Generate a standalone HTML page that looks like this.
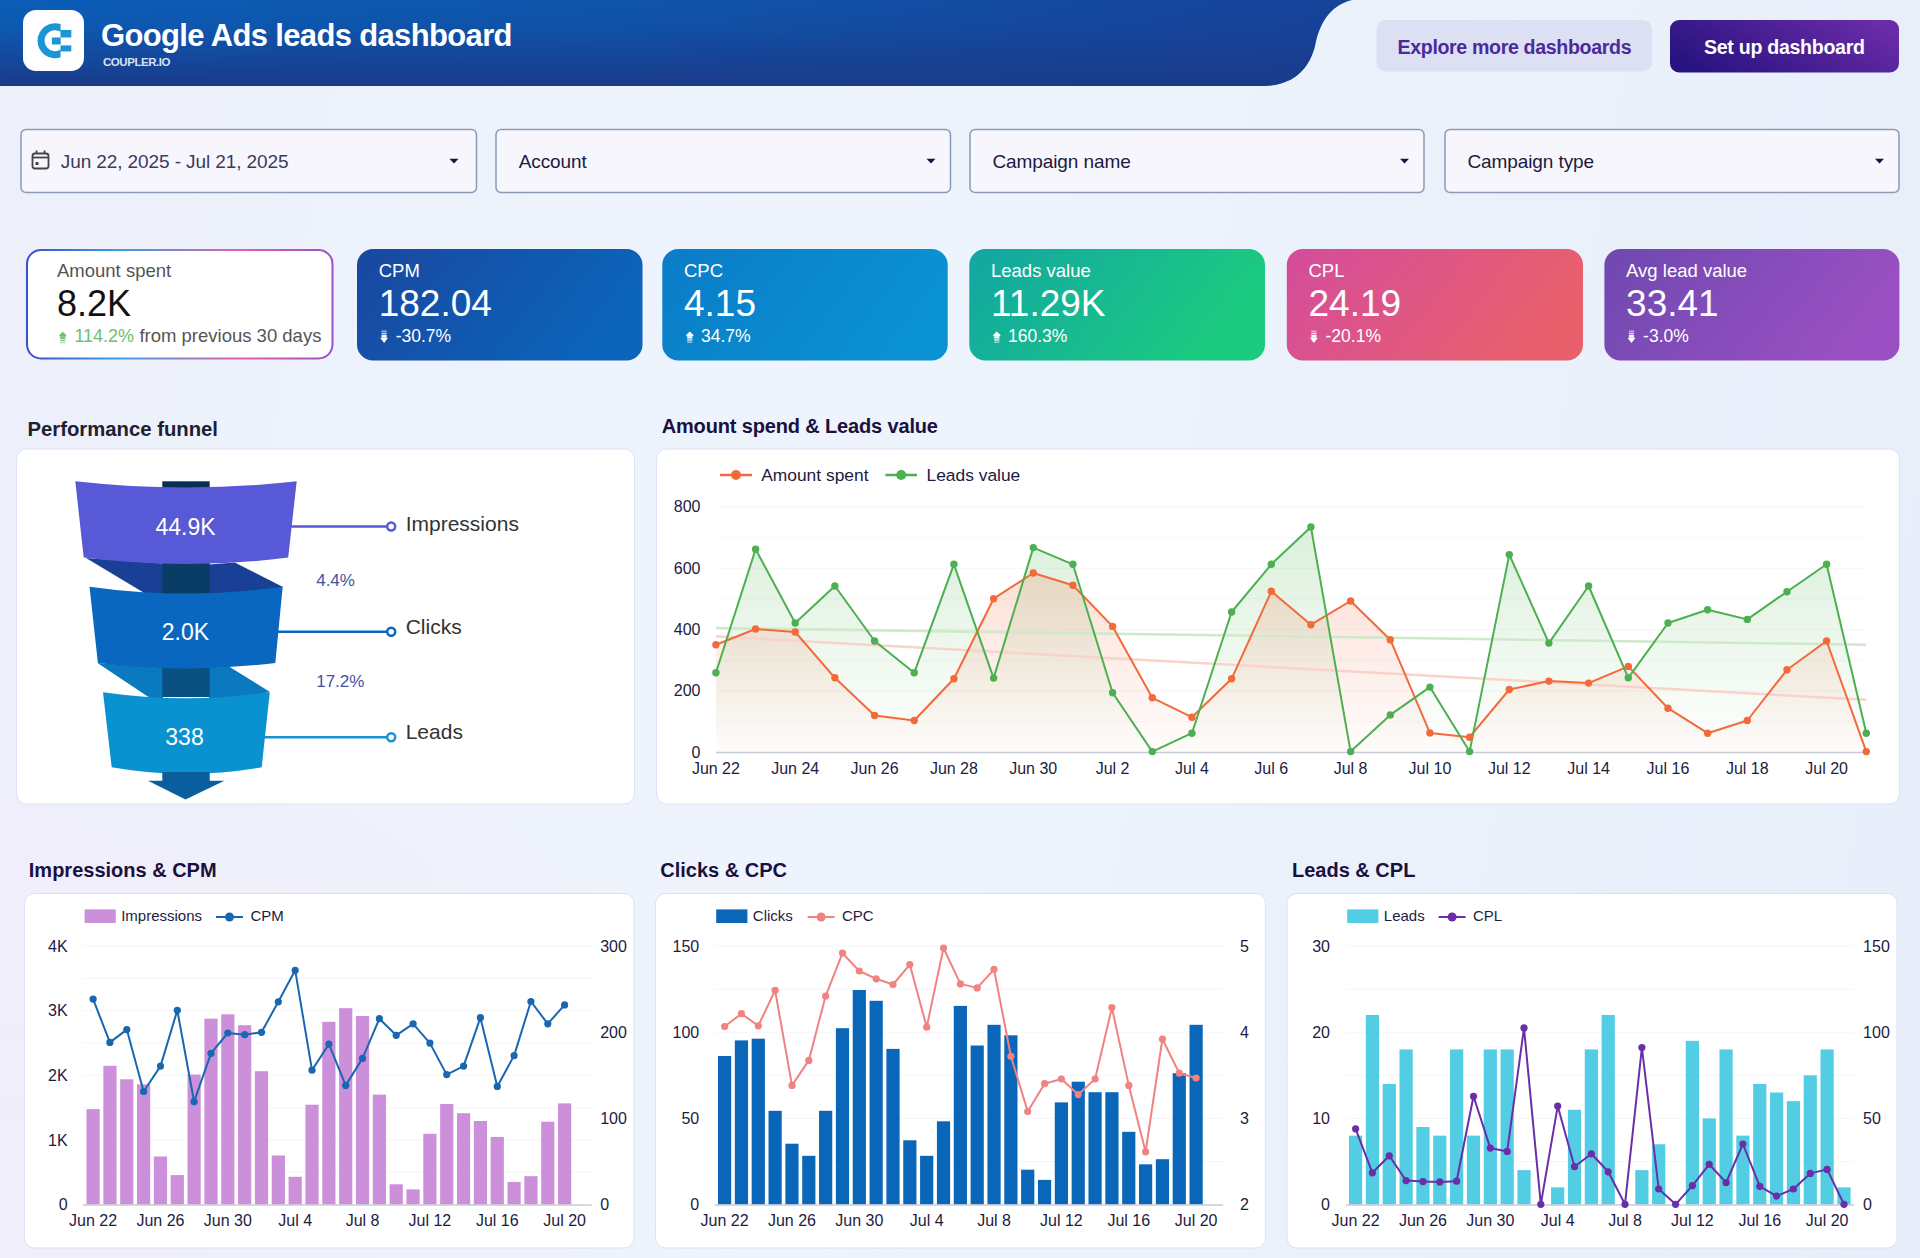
<!DOCTYPE html>
<html><head><meta charset="utf-8"><style>
html,body{margin:0;padding:0;width:1920px;height:1258px;overflow:hidden;}
body{background:radial-gradient(ellipse 800px 500px at 0% 85%,rgba(241,237,250,0.95),rgba(241,237,250,0)),linear-gradient(100deg,#edf0fa 0%,#eef4fd 45%,#e7eef9 100%);font-family:"Liberation Sans",sans-serif;}
svg{position:absolute;left:0;top:0;font-family:"Liberation Sans",sans-serif;}
</style></head><body>
<svg width="1920" height="1258" viewBox="0 0 1920 1258">
<defs>
<linearGradient id="hdr" gradientUnits="userSpaceOnUse" x1="0" y1="0" x2="1350" y2="0">
<stop offset="0" stop-color="#0a5eb8"/><stop offset="0.5" stop-color="#0f54aa"/><stop offset="1" stop-color="#17429a"/></linearGradient>
<linearGradient id="hdrv" gradientUnits="userSpaceOnUse" x1="0" y1="0" x2="0" y2="86">
<stop offset="0" stop-color="#1a3b8a" stop-opacity="0"/><stop offset="0.3" stop-color="#1a3b8a" stop-opacity="0.15"/><stop offset="1" stop-color="#1a3b8a" stop-opacity="1"/></linearGradient>
<linearGradient id="btn" x1="0" y1="0.7" x2="1" y2="0.3">
<stop offset="0" stop-color="#27137f"/><stop offset="1" stop-color="#6a2ba8"/></linearGradient>
<linearGradient id="kb0" x1="0" y1="0" x2="1" y2="0">
<stop offset="0" stop-color="#3b4fc8"/><stop offset="0.3" stop-color="#3aa0e0"/><stop offset="0.7" stop-color="#e060b0"/><stop offset="1" stop-color="#9a50c8"/></linearGradient>
<linearGradient id="kc0" x1="0" y1="0" x2="1" y2="0.3">
<stop offset="0" stop-color="#1a47a0"/><stop offset="1" stop-color="#0b64ba"/></linearGradient>
<linearGradient id="kc1" x1="0" y1="0" x2="1" y2="0.3">
<stop offset="0" stop-color="#0a7cc8"/><stop offset="1" stop-color="#0a92d2"/></linearGradient>
<linearGradient id="kc2" x1="0" y1="0" x2="1" y2="0.3">
<stop offset="0" stop-color="#12a6a2"/><stop offset="1" stop-color="#1ccb80"/></linearGradient>
<linearGradient id="kc3" x1="0" y1="0" x2="1" y2="0.3">
<stop offset="0" stop-color="#d44c9c"/><stop offset="1" stop-color="#e8606c"/></linearGradient>
<linearGradient id="kc4" x1="0" y1="0" x2="1" y2="0.3">
<stop offset="0" stop-color="#6e48b0"/><stop offset="1" stop-color="#9a50c2"/></linearGradient>
<linearGradient id="gA" x1="0" y1="0" x2="0" y2="1" gradientUnits="userSpaceOnUse" x2u="0">
</linearGradient>
<linearGradient id="fillO" gradientUnits="userSpaceOnUse" x1="0" y1="560" x2="0" y2="752">
<stop offset="0" stop-color="#f4805a" stop-opacity="0.26"/><stop offset="1" stop-color="#f4805a" stop-opacity="0.02"/></linearGradient>
<linearGradient id="fillG" gradientUnits="userSpaceOnUse" x1="0" y1="530" x2="0" y2="752">
<stop offset="0" stop-color="#5cb85c" stop-opacity="0.22"/><stop offset="1" stop-color="#5cb85c" stop-opacity="0.0"/></linearGradient>
</defs>
<path d="M0 0 H1352 C1328 6 1319 26 1315 46 C1309 70 1292 86 1262 86 H0 Z" fill="url(#hdr)"/>
<path d="M0 0 H1352 C1328 6 1319 26 1315 46 C1309 70 1292 86 1262 86 H0 Z" fill="url(#hdrv)"/>
<rect x="23" y="10" width="61" height="61" rx="13" fill="#ffffff"/>
<path d="M60.6 24.1 A17.5 17.5 0 1 0 60.6 57.3 L60.6 49.6 A10.5 10.5 0 1 1 60.6 31.8 Z" fill="#1a96d4"/>
<rect x="60.5" y="30" width="10.8" height="7.5" fill="#1a96d4"/>
<rect x="51.9" y="37.5" width="8.8" height="7" fill="#1a96d4"/>
<rect x="60.5" y="45.4" width="10.8" height="6" fill="#1a96d4"/>
<text x="101.00" y="46.00" font-size="31" fill="#ffffff" font-weight="bold" text-anchor="start" letter-spacing="-0.65" >Google Ads leads dashboard</text>
<text x="103.00" y="66.00" font-size="11.5" fill="#d8e2f4" font-weight="bold" text-anchor="start" letter-spacing="-0.45" >COUPLER.IO</text>
<rect x="1376.5" y="20" width="275.5" height="51.5" rx="9" fill="#dce0f2"/>
<text x="1397.50" y="53.80" font-size="19.6" fill="#4b2a9c" font-weight="bold" text-anchor="start" letter-spacing="-0.35" >Explore more dashboards</text>
<rect x="1670" y="20" width="229" height="52.5" rx="9" fill="url(#btn)"/>
<text x="1704.00" y="53.80" font-size="19.6" fill="#ffffff" font-weight="bold" text-anchor="start" letter-spacing="-0.3" >Set up dashboard</text>
<rect x="21" y="129.5" width="455.5" height="63" rx="5" fill="#f7f6fd" stroke="#8b9bb4" stroke-width="1.5"/>
<text x="60.80" y="168.00" font-size="19" fill="#3d3a5e" text-anchor="start" letter-spacing="-0.1" >Jun 22, 2025 - Jul 21, 2025</text>
<path d="M449.5 158.8 H458.5 L454 163.6 Z" fill="#17143f"/>
<rect x="496" y="129.5" width="454.5" height="63" rx="5" fill="#f7f6fd" stroke="#8b9bb4" stroke-width="1.5"/>
<text x="518.70" y="168.00" font-size="19" fill="#1d1a3e" text-anchor="start" letter-spacing="-0.1" >Account</text>
<path d="M926.5 158.8 H935.5 L931 163.6 Z" fill="#17143f"/>
<rect x="970" y="129.5" width="454" height="63" rx="5" fill="#f7f6fd" stroke="#8b9bb4" stroke-width="1.5"/>
<text x="992.50" y="168.00" font-size="19" fill="#1d1a3e" text-anchor="start" letter-spacing="-0.1" >Campaign name</text>
<path d="M1400.0 158.8 H1409.0 L1404.5 163.6 Z" fill="#17143f"/>
<rect x="1445" y="129.5" width="454" height="63" rx="5" fill="#f7f6fd" stroke="#8b9bb4" stroke-width="1.5"/>
<text x="1467.50" y="168.00" font-size="19" fill="#1d1a3e" text-anchor="start" letter-spacing="-0.1" >Campaign type</text>
<path d="M1875.0 158.8 H1884.0 L1879.5 163.6 Z" fill="#17143f"/>
<g fill="none" stroke="#444" stroke-width="1.8"><rect x="32.5" y="153.5" width="16" height="15" rx="2.5"/><line x1="32.5" y1="157.5" x2="48.5" y2="157.5"/><line x1="36.5" y1="150.5" x2="36.5" y2="154"/><line x1="44.5" y1="150.5" x2="44.5" y2="154"/></g><rect x="35.5" y="162" width="3" height="3" fill="#444"/>
<rect x="27" y="250" width="305.5" height="108.5" rx="14" fill="#ffffff" stroke="url(#kb0)" stroke-width="2"/>
<text x="57.00" y="276.60" font-size="18.5" fill="#555555" text-anchor="start" >Amount spent</text>
<text x="57.00" y="315.60" font-size="36" fill="#111111" text-anchor="start" >8.2K</text>
<text x="74.40" y="341.70" font-size="18" fill="#6cc070" text-anchor="start" >114.2%</text>
<text x="139.40" y="341.70" font-size="18.5" fill="#555555" text-anchor="start" >from previous 30 days</text>
<path d="M62.800000000000004 331.7 L66.4 335.3 V336.5 H59.2 V335.3 Z" fill="#6cc070"/><rect x="60.2" y="336.5" width="5.2" height="2.4" fill="#6cc070" opacity="0.95"/><rect x="60.2" y="339.5" width="5.2" height="1.6" fill="#6cc070" opacity="0.75"/><rect x="60.2" y="341.7" width="5.2" height="1.6" fill="#6cc070" opacity="0.5"/>
<rect x="357" y="249" width="285.5" height="111.5" rx="16" fill="url(#kc0)"/>
<text x="378.70" y="276.60" font-size="18.5" fill="#ffffff" text-anchor="start" >CPM</text>
<text x="378.70" y="315.60" font-size="37" fill="#ffffff" text-anchor="start" >182.04</text>
<rect x="381.5" y="330.4" width="5.2" height="1.6" fill="#ffffff" opacity="0.5"/><rect x="381.5" y="332.59999999999997" width="5.2" height="1.6" fill="#ffffff" opacity="0.75"/><rect x="381.5" y="334.79999999999995" width="5.2" height="2.9" fill="#ffffff" opacity="0.95"/><path d="M380.2 337.7 H388.0 L384.09999999999997 342.9 Z" fill="#ffffff"/>
<text x="395.70" y="341.70" font-size="17.5" fill="#ffffff" text-anchor="start" >-30.7%</text>
<rect x="662.3" y="249" width="285.4000000000001" height="111.5" rx="16" fill="url(#kc1)"/>
<text x="684.00" y="276.60" font-size="18.5" fill="#ffffff" text-anchor="start" >CPC</text>
<text x="684.00" y="315.60" font-size="37" fill="#ffffff" text-anchor="start" >4.15</text>
<path d="M689.8000000000001 331.4 L693.4000000000001 335.0 V336.2 H686.2 V335.0 Z" fill="#ffffff"/><rect x="687.2" y="336.2" width="5.2" height="2.4" fill="#ffffff" opacity="0.95"/><rect x="687.2" y="339.2" width="5.2" height="1.6" fill="#ffffff" opacity="0.75"/><rect x="687.2" y="341.4" width="5.2" height="1.6" fill="#ffffff" opacity="0.5"/>
<text x="701.00" y="341.70" font-size="17.5" fill="#ffffff" text-anchor="start" >34.7%</text>
<rect x="969.3" y="249" width="295.70000000000005" height="111.5" rx="16" fill="url(#kc2)"/>
<text x="991.00" y="276.60" font-size="18.5" fill="#ffffff" text-anchor="start" >Leads value</text>
<text x="991.00" y="315.60" font-size="37" fill="#ffffff" text-anchor="start" >11.29K</text>
<path d="M996.8000000000001 331.4 L1000.4000000000001 335.0 V336.2 H993.2 V335.0 Z" fill="#ffffff"/><rect x="994.2" y="336.2" width="5.2" height="2.4" fill="#ffffff" opacity="0.95"/><rect x="994.2" y="339.2" width="5.2" height="1.6" fill="#ffffff" opacity="0.75"/><rect x="994.2" y="341.4" width="5.2" height="1.6" fill="#ffffff" opacity="0.5"/>
<text x="1008.00" y="341.70" font-size="17.5" fill="#ffffff" text-anchor="start" >160.3%</text>
<rect x="1286.8" y="249" width="296.20000000000005" height="111.5" rx="16" fill="url(#kc3)"/>
<text x="1308.50" y="276.60" font-size="18.5" fill="#ffffff" text-anchor="start" >CPL</text>
<text x="1308.50" y="315.60" font-size="37" fill="#ffffff" text-anchor="start" >24.19</text>
<rect x="1311.3" y="330.4" width="5.2" height="1.6" fill="#ffffff" opacity="0.5"/><rect x="1311.3" y="332.59999999999997" width="5.2" height="1.6" fill="#ffffff" opacity="0.75"/><rect x="1311.3" y="334.79999999999995" width="5.2" height="2.9" fill="#ffffff" opacity="0.95"/><path d="M1310.0 337.7 H1317.8 L1313.9 342.9 Z" fill="#ffffff"/>
<text x="1325.50" y="341.70" font-size="17.5" fill="#ffffff" text-anchor="start" >-20.1%</text>
<rect x="1604.4" y="249" width="295.0" height="111.5" rx="16" fill="url(#kc4)"/>
<text x="1626.10" y="276.60" font-size="18.5" fill="#ffffff" text-anchor="start" >Avg lead value</text>
<text x="1626.10" y="315.60" font-size="37" fill="#ffffff" text-anchor="start" >33.41</text>
<rect x="1628.9" y="330.4" width="5.2" height="1.6" fill="#ffffff" opacity="0.5"/><rect x="1628.9" y="332.59999999999997" width="5.2" height="1.6" fill="#ffffff" opacity="0.75"/><rect x="1628.9" y="334.79999999999995" width="5.2" height="2.9" fill="#ffffff" opacity="0.95"/><path d="M1627.6000000000001 337.7 H1635.4 L1631.5000000000002 342.9 Z" fill="#ffffff"/>
<text x="1643.10" y="341.70" font-size="17.5" fill="#ffffff" text-anchor="start" >-3.0%</text>
<text x="27.50" y="435.80" font-size="20.3" fill="#1f2030" font-weight="bold" text-anchor="start" >Performance funnel</text>
<text x="661.70" y="433.40" font-size="20" fill="#1a1040" font-weight="bold" text-anchor="start" letter-spacing="-0.15" >Amount spend &amp; Leads value</text>
<rect x="16.5" y="449" width="618" height="355" rx="10" fill="#ffffff" stroke="#d9e3f3" stroke-width="1"/>
<rect x="656.5" y="449" width="1243" height="355" rx="10" fill="#ffffff" stroke="#d9e3f3" stroke-width="1"/>
<rect x="162.3" y="481.3" width="47.4" height="8" fill="#0a2f55"/>
<path d="M86 558 L163 563.5 L163 594 L146 594 Z" fill="#1a4096"/>
<path d="M209 564.5 L234.7 562.5 L283 586.9 L209 601 Z" fill="#1a4096"/>
<path d="M97.5 663 L163 668 L163 698 L150 698 Z" fill="#0a79c0"/>
<path d="M209 668 L229 666.5 L270 692 L209 705 Z" fill="#0a79c0"/>
<rect x="162.3" y="562" width="47.4" height="32" fill="#0a3d66"/>
<rect x="162.3" y="666" width="47.4" height="31" fill="#0a5182"/>
<path d="M75.3 481.3 Q186.0 493.7 296.7 481.3 L288.2 557.6 Q186.0 570.6 83.7 557.6 Z" fill="#5859d6"/>
<path d="M89.5 586.7 Q186.1 600.3000000000001 282.7 586.7 L275.3 663 Q186.1 674.0 97.9 663 Z" fill="#0a67bf"/>
<path d="M103 692.3 Q186.4 704.3 269.8 692.3 L261.7 767.3 Q186.4 780.6999999999999 111.7 767.3 Z" fill="#0a92d0"/>
<rect x="162.3" y="772" width="47.4" height="9" fill="#0a5e9e"/>
<path d="M148 780.8 H224.4 L185.5 799.5 Z" fill="#0a5e9e"/>
<text x="185.50" y="535.00" font-size="23" fill="#ffffff" text-anchor="middle" >44.9K</text>
<text x="185.50" y="640.00" font-size="23" fill="#ffffff" text-anchor="middle" >2.0K</text>
<text x="184.50" y="745.30" font-size="23" fill="#ffffff" text-anchor="middle" >338</text>
<line x1="291" y1="526.5" x2="387" y2="526.5" stroke="#5859d6" stroke-width="2.5"/>
<circle cx="391.2" cy="526.5" r="4" fill="#fff" stroke="#5859d6" stroke-width="2.5"/>
<text x="405.70" y="530.60" font-size="21" fill="#333333" text-anchor="start" >Impressions</text>
<line x1="277" y1="631.8" x2="387" y2="631.8" stroke="#0a67bf" stroke-width="2.5"/>
<circle cx="391.2" cy="631.8" r="4" fill="#fff" stroke="#0a67bf" stroke-width="2.5"/>
<text x="405.70" y="634.30" font-size="21" fill="#333333" text-anchor="start" >Clicks</text>
<line x1="264" y1="737.2" x2="387" y2="737.2" stroke="#1a92d0" stroke-width="2.5"/>
<circle cx="391.2" cy="737.2" r="4" fill="#fff" stroke="#1a92d0" stroke-width="2.5"/>
<text x="405.70" y="738.70" font-size="21" fill="#333333" text-anchor="start" >Leads</text>
<text x="316.20" y="586.40" font-size="17" fill="#4452a4" text-anchor="start" >4.4%</text>
<text x="316.20" y="687.00" font-size="17" fill="#4452a4" text-anchor="start" >17.2%</text>
<text x="700.50" y="757.80" font-size="16" fill="#1d1b3f" text-anchor="end" >0</text>
<line x1="718" y1="690.9" x2="1866" y2="690.9" stroke="#f5f5f9" stroke-width="1"/>
<text x="700.50" y="696.45" font-size="16" fill="#1d1b3f" text-anchor="end" >200</text>
<line x1="718" y1="629.5" x2="1866" y2="629.5" stroke="#f5f5f9" stroke-width="1"/>
<text x="700.50" y="635.10" font-size="16" fill="#1d1b3f" text-anchor="end" >400</text>
<line x1="718" y1="568.2" x2="1866" y2="568.2" stroke="#f5f5f9" stroke-width="1"/>
<text x="700.50" y="573.75" font-size="16" fill="#1d1b3f" text-anchor="end" >600</text>
<line x1="718" y1="506.8" x2="1866" y2="506.8" stroke="#f5f5f9" stroke-width="1"/>
<text x="700.50" y="512.40" font-size="16" fill="#1d1b3f" text-anchor="end" >800</text>
<line x1="718" y1="721.5" x2="1866" y2="721.5" stroke="#f7f7fa" stroke-width="1"/>
<line x1="718" y1="660.2" x2="1866" y2="660.2" stroke="#f7f7fa" stroke-width="1"/>
<line x1="718" y1="598.8" x2="1866" y2="598.8" stroke="#f7f7fa" stroke-width="1"/>
<line x1="718" y1="537.5" x2="1866" y2="537.5" stroke="#f7f7fa" stroke-width="1"/>
<polygon points="715.9,752.2 715.9,672.8 755.6,549.2 795.2,623.0 834.9,586.0 874.6,641.0 914.2,672.8 953.9,564.3 993.6,678.1 1033.3,547.6 1072.9,564.3 1112.6,692.8 1152.3,751.6 1191.9,733.2 1231.6,612.0 1271.3,564.3 1310.9,526.9 1350.6,751.6 1390.3,714.9 1429.9,687.1 1469.6,751.6 1509.3,554.6 1548.9,643.1 1588.6,586.0 1628.3,677.8 1668.0,623.0 1707.6,609.7 1747.3,619.4 1787.0,591.7 1826.6,564.3 1866.3,733.2 1866.3,752.2" fill="url(#fillG)"/>
<polygon points="715.9,752.2 715.9,644.7 755.6,629.0 795.2,632.0 834.9,677.8 874.6,715.5 914.2,720.5 953.9,678.8 993.6,598.7 1033.3,573.0 1072.9,585.3 1112.6,626.4 1152.3,697.8 1191.9,717.2 1231.6,678.8 1271.3,591.3 1310.9,624.7 1350.6,601.0 1390.3,639.7 1429.9,732.9 1469.6,737.2 1509.3,689.5 1548.9,681.1 1588.6,683.1 1628.3,666.4 1668.0,708.2 1707.6,733.2 1747.3,720.5 1787.0,669.8 1826.6,641.0 1866.3,751.6 1866.3,752.2" fill="url(#fillO)"/>
<line x1="716" y1="752.5" x2="1866" y2="752.5" stroke="#c9cbd6" stroke-width="1.5"/>
<line x1="716" y1="628" x2="1866" y2="644.7" stroke="#cfe9cb" stroke-width="2.6"/>
<line x1="716" y1="636.4" x2="1866" y2="699.8" stroke="#f9d3ca" stroke-width="2.6"/>
<polyline points="715.9,644.7 755.6,629.0 795.2,632.0 834.9,677.8 874.6,715.5 914.2,720.5 953.9,678.8 993.6,598.7 1033.3,573.0 1072.9,585.3 1112.6,626.4 1152.3,697.8 1191.9,717.2 1231.6,678.8 1271.3,591.3 1310.9,624.7 1350.6,601.0 1390.3,639.7 1429.9,732.9 1469.6,737.2 1509.3,689.5 1548.9,681.1 1588.6,683.1 1628.3,666.4 1668.0,708.2 1707.6,733.2 1747.3,720.5 1787.0,669.8 1826.6,641.0 1866.3,751.6" fill="none" stroke="#f26a3a" stroke-width="2" stroke-linejoin="round"/>
<polyline points="715.9,672.8 755.6,549.2 795.2,623.0 834.9,586.0 874.6,641.0 914.2,672.8 953.9,564.3 993.6,678.1 1033.3,547.6 1072.9,564.3 1112.6,692.8 1152.3,751.6 1191.9,733.2 1231.6,612.0 1271.3,564.3 1310.9,526.9 1350.6,751.6 1390.3,714.9 1429.9,687.1 1469.6,751.6 1509.3,554.6 1548.9,643.1 1588.6,586.0 1628.3,677.8 1668.0,623.0 1707.6,609.7 1747.3,619.4 1787.0,591.7 1826.6,564.3 1866.3,733.2" fill="none" stroke="#4caf50" stroke-width="2" stroke-linejoin="round"/>
<circle cx="715.9" cy="644.7" r="3.7" fill="#f26a3a"/>
<circle cx="755.6" cy="629.0" r="3.7" fill="#f26a3a"/>
<circle cx="795.2" cy="632.0" r="3.7" fill="#f26a3a"/>
<circle cx="834.9" cy="677.8" r="3.7" fill="#f26a3a"/>
<circle cx="874.6" cy="715.5" r="3.7" fill="#f26a3a"/>
<circle cx="914.2" cy="720.5" r="3.7" fill="#f26a3a"/>
<circle cx="953.9" cy="678.8" r="3.7" fill="#f26a3a"/>
<circle cx="993.6" cy="598.7" r="3.7" fill="#f26a3a"/>
<circle cx="1033.3" cy="573.0" r="3.7" fill="#f26a3a"/>
<circle cx="1072.9" cy="585.3" r="3.7" fill="#f26a3a"/>
<circle cx="1112.6" cy="626.4" r="3.7" fill="#f26a3a"/>
<circle cx="1152.3" cy="697.8" r="3.7" fill="#f26a3a"/>
<circle cx="1191.9" cy="717.2" r="3.7" fill="#f26a3a"/>
<circle cx="1231.6" cy="678.8" r="3.7" fill="#f26a3a"/>
<circle cx="1271.3" cy="591.3" r="3.7" fill="#f26a3a"/>
<circle cx="1310.9" cy="624.7" r="3.7" fill="#f26a3a"/>
<circle cx="1350.6" cy="601.0" r="3.7" fill="#f26a3a"/>
<circle cx="1390.3" cy="639.7" r="3.7" fill="#f26a3a"/>
<circle cx="1429.9" cy="732.9" r="3.7" fill="#f26a3a"/>
<circle cx="1469.6" cy="737.2" r="3.7" fill="#f26a3a"/>
<circle cx="1509.3" cy="689.5" r="3.7" fill="#f26a3a"/>
<circle cx="1548.9" cy="681.1" r="3.7" fill="#f26a3a"/>
<circle cx="1588.6" cy="683.1" r="3.7" fill="#f26a3a"/>
<circle cx="1628.3" cy="666.4" r="3.7" fill="#f26a3a"/>
<circle cx="1668.0" cy="708.2" r="3.7" fill="#f26a3a"/>
<circle cx="1707.6" cy="733.2" r="3.7" fill="#f26a3a"/>
<circle cx="1747.3" cy="720.5" r="3.7" fill="#f26a3a"/>
<circle cx="1787.0" cy="669.8" r="3.7" fill="#f26a3a"/>
<circle cx="1826.6" cy="641.0" r="3.7" fill="#f26a3a"/>
<circle cx="1866.3" cy="751.6" r="3.7" fill="#f26a3a"/>
<circle cx="715.9" cy="672.8" r="3.7" fill="#4caf50"/>
<circle cx="755.6" cy="549.2" r="3.7" fill="#4caf50"/>
<circle cx="795.2" cy="623.0" r="3.7" fill="#4caf50"/>
<circle cx="834.9" cy="586.0" r="3.7" fill="#4caf50"/>
<circle cx="874.6" cy="641.0" r="3.7" fill="#4caf50"/>
<circle cx="914.2" cy="672.8" r="3.7" fill="#4caf50"/>
<circle cx="953.9" cy="564.3" r="3.7" fill="#4caf50"/>
<circle cx="993.6" cy="678.1" r="3.7" fill="#4caf50"/>
<circle cx="1033.3" cy="547.6" r="3.7" fill="#4caf50"/>
<circle cx="1072.9" cy="564.3" r="3.7" fill="#4caf50"/>
<circle cx="1112.6" cy="692.8" r="3.7" fill="#4caf50"/>
<circle cx="1152.3" cy="751.6" r="3.7" fill="#4caf50"/>
<circle cx="1191.9" cy="733.2" r="3.7" fill="#4caf50"/>
<circle cx="1231.6" cy="612.0" r="3.7" fill="#4caf50"/>
<circle cx="1271.3" cy="564.3" r="3.7" fill="#4caf50"/>
<circle cx="1310.9" cy="526.9" r="3.7" fill="#4caf50"/>
<circle cx="1350.6" cy="751.6" r="3.7" fill="#4caf50"/>
<circle cx="1390.3" cy="714.9" r="3.7" fill="#4caf50"/>
<circle cx="1429.9" cy="687.1" r="3.7" fill="#4caf50"/>
<circle cx="1469.6" cy="751.6" r="3.7" fill="#4caf50"/>
<circle cx="1509.3" cy="554.6" r="3.7" fill="#4caf50"/>
<circle cx="1548.9" cy="643.1" r="3.7" fill="#4caf50"/>
<circle cx="1588.6" cy="586.0" r="3.7" fill="#4caf50"/>
<circle cx="1628.3" cy="677.8" r="3.7" fill="#4caf50"/>
<circle cx="1668.0" cy="623.0" r="3.7" fill="#4caf50"/>
<circle cx="1707.6" cy="609.7" r="3.7" fill="#4caf50"/>
<circle cx="1747.3" cy="619.4" r="3.7" fill="#4caf50"/>
<circle cx="1787.0" cy="591.7" r="3.7" fill="#4caf50"/>
<circle cx="1826.6" cy="564.3" r="3.7" fill="#4caf50"/>
<circle cx="1866.3" cy="733.2" r="3.7" fill="#4caf50"/>
<text x="715.90" y="774.00" font-size="16" fill="#1d1b3f" text-anchor="middle" >Jun 22</text>
<text x="795.24" y="774.00" font-size="16" fill="#1d1b3f" text-anchor="middle" >Jun 24</text>
<text x="874.58" y="774.00" font-size="16" fill="#1d1b3f" text-anchor="middle" >Jun 26</text>
<text x="953.91" y="774.00" font-size="16" fill="#1d1b3f" text-anchor="middle" >Jun 28</text>
<text x="1033.25" y="774.00" font-size="16" fill="#1d1b3f" text-anchor="middle" >Jun 30</text>
<text x="1112.59" y="774.00" font-size="16" fill="#1d1b3f" text-anchor="middle" >Jul 2</text>
<text x="1191.93" y="774.00" font-size="16" fill="#1d1b3f" text-anchor="middle" >Jul 4</text>
<text x="1271.27" y="774.00" font-size="16" fill="#1d1b3f" text-anchor="middle" >Jul 6</text>
<text x="1350.60" y="774.00" font-size="16" fill="#1d1b3f" text-anchor="middle" >Jul 8</text>
<text x="1429.94" y="774.00" font-size="16" fill="#1d1b3f" text-anchor="middle" >Jul 10</text>
<text x="1509.28" y="774.00" font-size="16" fill="#1d1b3f" text-anchor="middle" >Jul 12</text>
<text x="1588.62" y="774.00" font-size="16" fill="#1d1b3f" text-anchor="middle" >Jul 14</text>
<text x="1667.96" y="774.00" font-size="16" fill="#1d1b3f" text-anchor="middle" >Jul 16</text>
<text x="1747.29" y="774.00" font-size="16" fill="#1d1b3f" text-anchor="middle" >Jul 18</text>
<text x="1826.63" y="774.00" font-size="16" fill="#1d1b3f" text-anchor="middle" >Jul 20</text>
<line x1="720" y1="475" x2="752" y2="475" stroke="#f26a3a" stroke-width="2.5"/><circle cx="736" cy="475" r="5" fill="#f26a3a"/>
<text x="761.20" y="480.80" font-size="17.4" fill="#1d1b3f" text-anchor="start" >Amount spent</text>
<line x1="885.4" y1="475" x2="917" y2="475" stroke="#4caf50" stroke-width="2.5"/><circle cx="901.2" cy="475" r="5" fill="#4caf50"/>
<text x="926.50" y="480.80" font-size="17.4" fill="#1d1b3f" text-anchor="start" >Leads value</text>
<rect x="24.5" y="893.5" width="609.5" height="354.5" rx="10" fill="#ffffff" stroke="#d9e3f3" stroke-width="1"/>
<text x="28.80" y="877.20" font-size="20" fill="#1a1040" font-weight="bold" text-anchor="start" >Impressions &amp; CPM</text>
<rect x="84.6" y="909.4" width="31.2" height="13.6" fill="#cc8fd9"/>
<text x="121.20" y="921.20" font-size="15" fill="#1d1b3f" text-anchor="start" >Impressions</text>
<line x1="216" y1="917" x2="243" y2="917" stroke="#1a67b1" stroke-width="2"/><circle cx="229.5" cy="917" r="4.5" fill="#1a67b1"/>
<text x="250.50" y="921.20" font-size="15" fill="#1d1b3f" text-anchor="start" >CPM</text>
<line x1="83" y1="1172.3" x2="591.7" y2="1172.3" stroke="#f5f5f9" stroke-width="1"/>
<line x1="83" y1="1139.9" x2="591.7" y2="1139.9" stroke="#f5f5f9" stroke-width="1"/>
<line x1="83" y1="1107.6" x2="591.7" y2="1107.6" stroke="#f5f5f9" stroke-width="1"/>
<line x1="83" y1="1075.3" x2="591.7" y2="1075.3" stroke="#f5f5f9" stroke-width="1"/>
<line x1="83" y1="1043.0" x2="591.7" y2="1043.0" stroke="#f5f5f9" stroke-width="1"/>
<line x1="83" y1="1010.6" x2="591.7" y2="1010.6" stroke="#f5f5f9" stroke-width="1"/>
<line x1="83" y1="978.3" x2="591.7" y2="978.3" stroke="#f5f5f9" stroke-width="1"/>
<line x1="83" y1="946.0" x2="591.7" y2="946.0" stroke="#f5f5f9" stroke-width="1"/>
<text x="67.70" y="1210.20" font-size="16" fill="#1d1b3f" text-anchor="end" >0</text>
<text x="67.70" y="1145.55" font-size="16" fill="#1d1b3f" text-anchor="end" >1K</text>
<text x="67.70" y="1080.90" font-size="16" fill="#1d1b3f" text-anchor="end" >2K</text>
<text x="67.70" y="1016.25" font-size="16" fill="#1d1b3f" text-anchor="end" >3K</text>
<text x="67.70" y="951.60" font-size="16" fill="#1d1b3f" text-anchor="end" >4K</text>
<text x="600.20" y="1210.20" font-size="16" fill="#1d1b3f" text-anchor="start" >0</text>
<text x="600.20" y="1124.00" font-size="16" fill="#1d1b3f" text-anchor="start" >100</text>
<text x="600.20" y="1037.80" font-size="16" fill="#1d1b3f" text-anchor="start" >200</text>
<text x="600.20" y="951.60" font-size="16" fill="#1d1b3f" text-anchor="start" >300</text>
<rect x="86.50" y="1109.10" width="13.2" height="95.50" fill="#cc8fd9"/>
<rect x="103.34" y="1065.80" width="13.2" height="138.80" fill="#cc8fd9"/>
<rect x="120.18" y="1079.30" width="13.2" height="125.30" fill="#cc8fd9"/>
<rect x="137.02" y="1084.40" width="13.2" height="120.20" fill="#cc8fd9"/>
<rect x="153.86" y="1156.50" width="13.2" height="48.10" fill="#cc8fd9"/>
<rect x="170.70" y="1175.10" width="13.2" height="29.50" fill="#cc8fd9"/>
<rect x="187.54" y="1074.60" width="13.2" height="130.00" fill="#cc8fd9"/>
<rect x="204.38" y="1018.70" width="13.2" height="185.90" fill="#cc8fd9"/>
<rect x="221.22" y="1014.30" width="13.2" height="190.30" fill="#cc8fd9"/>
<rect x="238.06" y="1025.20" width="13.2" height="179.40" fill="#cc8fd9"/>
<rect x="254.90" y="1071.20" width="13.2" height="133.40" fill="#cc8fd9"/>
<rect x="271.74" y="1155.50" width="13.2" height="49.10" fill="#cc8fd9"/>
<rect x="288.58" y="1176.80" width="13.2" height="27.80" fill="#cc8fd9"/>
<rect x="305.42" y="1104.70" width="13.2" height="99.90" fill="#cc8fd9"/>
<rect x="322.26" y="1021.80" width="13.2" height="182.80" fill="#cc8fd9"/>
<rect x="339.10" y="1008.20" width="13.2" height="196.40" fill="#cc8fd9"/>
<rect x="355.94" y="1016.00" width="13.2" height="188.60" fill="#cc8fd9"/>
<rect x="372.78" y="1094.60" width="13.2" height="110.00" fill="#cc8fd9"/>
<rect x="389.62" y="1184.30" width="13.2" height="20.30" fill="#cc8fd9"/>
<rect x="406.46" y="1189.40" width="13.2" height="15.20" fill="#cc8fd9"/>
<rect x="423.30" y="1133.80" width="13.2" height="70.80" fill="#cc8fd9"/>
<rect x="440.14" y="1104.00" width="13.2" height="100.60" fill="#cc8fd9"/>
<rect x="456.98" y="1113.20" width="13.2" height="91.40" fill="#cc8fd9"/>
<rect x="473.82" y="1121.00" width="13.2" height="83.60" fill="#cc8fd9"/>
<rect x="490.66" y="1136.90" width="13.2" height="67.70" fill="#cc8fd9"/>
<rect x="507.50" y="1181.90" width="13.2" height="22.70" fill="#cc8fd9"/>
<rect x="524.34" y="1176.20" width="13.2" height="28.40" fill="#cc8fd9"/>
<rect x="541.18" y="1121.70" width="13.2" height="82.90" fill="#cc8fd9"/>
<rect x="558.02" y="1103.40" width="13.2" height="101.20" fill="#cc8fd9"/>
<line x1="83" y1="1205" x2="591.7" y2="1205" stroke="#c9cbd6" stroke-width="1.5"/>
<polyline points="93.1,999.1 109.9,1042.4 126.8,1029.6 143.6,1091.5 160.5,1066.1 177.3,1010.3 194.1,1101.7 211.0,1053.3 227.8,1033.0 244.7,1034.7 261.5,1032.3 278.3,1001.8 295.2,970.3 312.0,1070.2 328.9,1044.1 345.7,1085.4 362.5,1058.4 379.4,1018.7 396.2,1035.3 413.1,1023.8 429.9,1043.1 446.7,1074.6 463.6,1066.1 480.4,1017.7 497.3,1086.4 514.1,1055.6 530.9,1001.5 547.8,1023.8 564.6,1004.9" fill="none" stroke="#1a67b1" stroke-width="2" stroke-linejoin="round"/>
<circle cx="93.1" cy="999.1" r="3.6" fill="#1a67b1"/>
<circle cx="109.9" cy="1042.4" r="3.6" fill="#1a67b1"/>
<circle cx="126.8" cy="1029.6" r="3.6" fill="#1a67b1"/>
<circle cx="143.6" cy="1091.5" r="3.6" fill="#1a67b1"/>
<circle cx="160.5" cy="1066.1" r="3.6" fill="#1a67b1"/>
<circle cx="177.3" cy="1010.3" r="3.6" fill="#1a67b1"/>
<circle cx="194.1" cy="1101.7" r="3.6" fill="#1a67b1"/>
<circle cx="211.0" cy="1053.3" r="3.6" fill="#1a67b1"/>
<circle cx="227.8" cy="1033.0" r="3.6" fill="#1a67b1"/>
<circle cx="244.7" cy="1034.7" r="3.6" fill="#1a67b1"/>
<circle cx="261.5" cy="1032.3" r="3.6" fill="#1a67b1"/>
<circle cx="278.3" cy="1001.8" r="3.6" fill="#1a67b1"/>
<circle cx="295.2" cy="970.3" r="3.6" fill="#1a67b1"/>
<circle cx="312.0" cy="1070.2" r="3.6" fill="#1a67b1"/>
<circle cx="328.9" cy="1044.1" r="3.6" fill="#1a67b1"/>
<circle cx="345.7" cy="1085.4" r="3.6" fill="#1a67b1"/>
<circle cx="362.5" cy="1058.4" r="3.6" fill="#1a67b1"/>
<circle cx="379.4" cy="1018.7" r="3.6" fill="#1a67b1"/>
<circle cx="396.2" cy="1035.3" r="3.6" fill="#1a67b1"/>
<circle cx="413.1" cy="1023.8" r="3.6" fill="#1a67b1"/>
<circle cx="429.9" cy="1043.1" r="3.6" fill="#1a67b1"/>
<circle cx="446.7" cy="1074.6" r="3.6" fill="#1a67b1"/>
<circle cx="463.6" cy="1066.1" r="3.6" fill="#1a67b1"/>
<circle cx="480.4" cy="1017.7" r="3.6" fill="#1a67b1"/>
<circle cx="497.3" cy="1086.4" r="3.6" fill="#1a67b1"/>
<circle cx="514.1" cy="1055.6" r="3.6" fill="#1a67b1"/>
<circle cx="530.9" cy="1001.5" r="3.6" fill="#1a67b1"/>
<circle cx="547.8" cy="1023.8" r="3.6" fill="#1a67b1"/>
<circle cx="564.6" cy="1004.9" r="3.6" fill="#1a67b1"/>
<text x="93.10" y="1226.00" font-size="16" fill="#1d1b3f" text-anchor="middle" >Jun 22</text>
<text x="160.46" y="1226.00" font-size="16" fill="#1d1b3f" text-anchor="middle" >Jun 26</text>
<text x="227.82" y="1226.00" font-size="16" fill="#1d1b3f" text-anchor="middle" >Jun 30</text>
<text x="295.18" y="1226.00" font-size="16" fill="#1d1b3f" text-anchor="middle" >Jul 4</text>
<text x="362.54" y="1226.00" font-size="16" fill="#1d1b3f" text-anchor="middle" >Jul 8</text>
<text x="429.90" y="1226.00" font-size="16" fill="#1d1b3f" text-anchor="middle" >Jul 12</text>
<text x="497.26" y="1226.00" font-size="16" fill="#1d1b3f" text-anchor="middle" >Jul 16</text>
<text x="564.62" y="1226.00" font-size="16" fill="#1d1b3f" text-anchor="middle" >Jul 20</text>
<rect x="655.5" y="893.5" width="610.0999999999999" height="354.5" rx="10" fill="#ffffff" stroke="#d9e3f3" stroke-width="1"/>
<text x="660.30" y="877.20" font-size="20" fill="#1a1040" font-weight="bold" text-anchor="start" >Clicks &amp; CPC</text>
<rect x="716.2" y="909.4" width="31.2" height="13.6" fill="#0a66b9"/>
<text x="752.80" y="921.20" font-size="15" fill="#1d1b3f" text-anchor="start" >Clicks</text>
<line x1="807.6" y1="917" x2="834.6" y2="917" stroke="#f08282" stroke-width="2"/><circle cx="821.1" cy="917" r="4.5" fill="#f08282"/>
<text x="842.00" y="921.20" font-size="15" fill="#1d1b3f" text-anchor="start" >CPC</text>
<line x1="714.5" y1="1161.5" x2="1223" y2="1161.5" stroke="#f5f5f9" stroke-width="1"/>
<line x1="714.5" y1="1118.4" x2="1223" y2="1118.4" stroke="#f5f5f9" stroke-width="1"/>
<line x1="714.5" y1="1075.3" x2="1223" y2="1075.3" stroke="#f5f5f9" stroke-width="1"/>
<line x1="714.5" y1="1032.2" x2="1223" y2="1032.2" stroke="#f5f5f9" stroke-width="1"/>
<line x1="714.5" y1="989.1" x2="1223" y2="989.1" stroke="#f5f5f9" stroke-width="1"/>
<line x1="714.5" y1="946.0" x2="1223" y2="946.0" stroke="#f5f5f9" stroke-width="1"/>
<text x="699.20" y="1210.20" font-size="16" fill="#1d1b3f" text-anchor="end" >0</text>
<text x="699.20" y="1124.00" font-size="16" fill="#1d1b3f" text-anchor="end" >50</text>
<text x="699.20" y="1037.80" font-size="16" fill="#1d1b3f" text-anchor="end" >100</text>
<text x="699.20" y="951.60" font-size="16" fill="#1d1b3f" text-anchor="end" >150</text>
<text x="1239.90" y="1210.20" font-size="16" fill="#1d1b3f" text-anchor="start" >2</text>
<text x="1239.90" y="1124.00" font-size="16" fill="#1d1b3f" text-anchor="start" >3</text>
<text x="1239.90" y="1037.80" font-size="16" fill="#1d1b3f" text-anchor="start" >4</text>
<text x="1239.90" y="951.60" font-size="16" fill="#1d1b3f" text-anchor="start" >5</text>
<rect x="718.00" y="1056.00" width="13.2" height="148.60" fill="#0a66b9"/>
<rect x="734.84" y="1040.40" width="13.2" height="164.20" fill="#0a66b9"/>
<rect x="751.68" y="1038.70" width="13.2" height="165.90" fill="#0a66b9"/>
<rect x="768.52" y="1110.80" width="13.2" height="93.80" fill="#0a66b9"/>
<rect x="785.36" y="1143.70" width="13.2" height="60.90" fill="#0a66b9"/>
<rect x="802.20" y="1155.80" width="13.2" height="48.80" fill="#0a66b9"/>
<rect x="819.04" y="1110.80" width="13.2" height="93.80" fill="#0a66b9"/>
<rect x="835.88" y="1028.20" width="13.2" height="176.40" fill="#0a66b9"/>
<rect x="852.72" y="990.00" width="13.2" height="214.60" fill="#0a66b9"/>
<rect x="869.56" y="1000.80" width="13.2" height="203.80" fill="#0a66b9"/>
<rect x="886.40" y="1048.90" width="13.2" height="155.70" fill="#0a66b9"/>
<rect x="903.24" y="1140.30" width="13.2" height="64.30" fill="#0a66b9"/>
<rect x="920.08" y="1155.80" width="13.2" height="48.80" fill="#0a66b9"/>
<rect x="936.92" y="1121.30" width="13.2" height="83.30" fill="#0a66b9"/>
<rect x="953.76" y="1005.90" width="13.2" height="198.70" fill="#0a66b9"/>
<rect x="970.60" y="1045.50" width="13.2" height="159.10" fill="#0a66b9"/>
<rect x="987.44" y="1024.80" width="13.2" height="179.80" fill="#0a66b9"/>
<rect x="1004.28" y="1035.30" width="13.2" height="169.30" fill="#0a66b9"/>
<rect x="1021.12" y="1169.70" width="13.2" height="34.90" fill="#0a66b9"/>
<rect x="1037.96" y="1179.90" width="13.2" height="24.70" fill="#0a66b9"/>
<rect x="1054.80" y="1102.40" width="13.2" height="102.20" fill="#0a66b9"/>
<rect x="1071.64" y="1081.70" width="13.2" height="122.90" fill="#0a66b9"/>
<rect x="1088.48" y="1092.20" width="13.2" height="112.40" fill="#0a66b9"/>
<rect x="1105.32" y="1092.20" width="13.2" height="112.40" fill="#0a66b9"/>
<rect x="1122.16" y="1131.80" width="13.2" height="72.80" fill="#0a66b9"/>
<rect x="1139.00" y="1164.30" width="13.2" height="40.30" fill="#0a66b9"/>
<rect x="1155.84" y="1159.20" width="13.2" height="45.40" fill="#0a66b9"/>
<rect x="1172.68" y="1073.20" width="13.2" height="131.40" fill="#0a66b9"/>
<rect x="1189.52" y="1024.80" width="13.2" height="179.80" fill="#0a66b9"/>
<line x1="714.5" y1="1205" x2="1223" y2="1205" stroke="#c9cbd6" stroke-width="1.5"/>
<polyline points="724.6,1026.5 741.4,1013.7 758.3,1025.8 775.1,990.3 792.0,1085.4 808.8,1060.4 825.6,996.1 842.5,953.1 859.3,971.0 876.2,978.8 893.0,984.5 909.8,964.6 926.7,1027.2 943.5,948.0 960.4,983.9 977.2,987.9 994.0,969.3 1010.9,1056.3 1027.7,1111.5 1044.6,1083.7 1061.4,1079.0 1078.2,1094.6 1095.1,1079.0 1111.9,1007.6 1128.8,1085.4 1145.6,1151.8 1162.4,1039.0 1179.3,1073.2 1196.1,1078.0" fill="none" stroke="#f08282" stroke-width="2" stroke-linejoin="round"/>
<circle cx="724.6" cy="1026.5" r="3.6" fill="#f08282"/>
<circle cx="741.4" cy="1013.7" r="3.6" fill="#f08282"/>
<circle cx="758.3" cy="1025.8" r="3.6" fill="#f08282"/>
<circle cx="775.1" cy="990.3" r="3.6" fill="#f08282"/>
<circle cx="792.0" cy="1085.4" r="3.6" fill="#f08282"/>
<circle cx="808.8" cy="1060.4" r="3.6" fill="#f08282"/>
<circle cx="825.6" cy="996.1" r="3.6" fill="#f08282"/>
<circle cx="842.5" cy="953.1" r="3.6" fill="#f08282"/>
<circle cx="859.3" cy="971.0" r="3.6" fill="#f08282"/>
<circle cx="876.2" cy="978.8" r="3.6" fill="#f08282"/>
<circle cx="893.0" cy="984.5" r="3.6" fill="#f08282"/>
<circle cx="909.8" cy="964.6" r="3.6" fill="#f08282"/>
<circle cx="926.7" cy="1027.2" r="3.6" fill="#f08282"/>
<circle cx="943.5" cy="948.0" r="3.6" fill="#f08282"/>
<circle cx="960.4" cy="983.9" r="3.6" fill="#f08282"/>
<circle cx="977.2" cy="987.9" r="3.6" fill="#f08282"/>
<circle cx="994.0" cy="969.3" r="3.6" fill="#f08282"/>
<circle cx="1010.9" cy="1056.3" r="3.6" fill="#f08282"/>
<circle cx="1027.7" cy="1111.5" r="3.6" fill="#f08282"/>
<circle cx="1044.6" cy="1083.7" r="3.6" fill="#f08282"/>
<circle cx="1061.4" cy="1079.0" r="3.6" fill="#f08282"/>
<circle cx="1078.2" cy="1094.6" r="3.6" fill="#f08282"/>
<circle cx="1095.1" cy="1079.0" r="3.6" fill="#f08282"/>
<circle cx="1111.9" cy="1007.6" r="3.6" fill="#f08282"/>
<circle cx="1128.8" cy="1085.4" r="3.6" fill="#f08282"/>
<circle cx="1145.6" cy="1151.8" r="3.6" fill="#f08282"/>
<circle cx="1162.4" cy="1039.0" r="3.6" fill="#f08282"/>
<circle cx="1179.3" cy="1073.2" r="3.6" fill="#f08282"/>
<circle cx="1196.1" cy="1078.0" r="3.6" fill="#f08282"/>
<text x="724.60" y="1226.00" font-size="16" fill="#1d1b3f" text-anchor="middle" >Jun 22</text>
<text x="791.96" y="1226.00" font-size="16" fill="#1d1b3f" text-anchor="middle" >Jun 26</text>
<text x="859.32" y="1226.00" font-size="16" fill="#1d1b3f" text-anchor="middle" >Jun 30</text>
<text x="926.68" y="1226.00" font-size="16" fill="#1d1b3f" text-anchor="middle" >Jul 4</text>
<text x="994.04" y="1226.00" font-size="16" fill="#1d1b3f" text-anchor="middle" >Jul 8</text>
<text x="1061.40" y="1226.00" font-size="16" fill="#1d1b3f" text-anchor="middle" >Jul 12</text>
<text x="1128.76" y="1226.00" font-size="16" fill="#1d1b3f" text-anchor="middle" >Jul 16</text>
<text x="1196.12" y="1226.00" font-size="16" fill="#1d1b3f" text-anchor="middle" >Jul 20</text>
<rect x="1287" y="893.5" width="610" height="354.5" rx="10" fill="#ffffff" stroke="#d9e3f3" stroke-width="1"/>
<text x="1292.00" y="877.20" font-size="20" fill="#1a1040" font-weight="bold" text-anchor="start" >Leads &amp; CPL</text>
<rect x="1347.2" y="909.4" width="31.2" height="13.6" fill="#52cde3"/>
<text x="1383.80" y="921.20" font-size="15" fill="#1d1b3f" text-anchor="start" >Leads</text>
<line x1="1438.6" y1="917" x2="1465.6" y2="917" stroke="#6a2fa8" stroke-width="2"/><circle cx="1452.1" cy="917" r="4.5" fill="#6a2fa8"/>
<text x="1473.00" y="921.20" font-size="15" fill="#1d1b3f" text-anchor="start" >CPL</text>
<line x1="1346.2" y1="1161.5" x2="1854" y2="1161.5" stroke="#f5f5f9" stroke-width="1"/>
<line x1="1346.2" y1="1118.4" x2="1854" y2="1118.4" stroke="#f5f5f9" stroke-width="1"/>
<line x1="1346.2" y1="1075.3" x2="1854" y2="1075.3" stroke="#f5f5f9" stroke-width="1"/>
<line x1="1346.2" y1="1032.2" x2="1854" y2="1032.2" stroke="#f5f5f9" stroke-width="1"/>
<line x1="1346.2" y1="989.1" x2="1854" y2="989.1" stroke="#f5f5f9" stroke-width="1"/>
<line x1="1346.2" y1="946.0" x2="1854" y2="946.0" stroke="#f5f5f9" stroke-width="1"/>
<text x="1330.00" y="1210.20" font-size="16" fill="#1d1b3f" text-anchor="end" >0</text>
<text x="1330.00" y="1124.00" font-size="16" fill="#1d1b3f" text-anchor="end" >10</text>
<text x="1330.00" y="1037.80" font-size="16" fill="#1d1b3f" text-anchor="end" >20</text>
<text x="1330.00" y="951.60" font-size="16" fill="#1d1b3f" text-anchor="end" >30</text>
<text x="1863.10" y="1210.20" font-size="16" fill="#1d1b3f" text-anchor="start" >0</text>
<text x="1863.10" y="1124.00" font-size="16" fill="#1d1b3f" text-anchor="start" >50</text>
<text x="1863.10" y="1037.80" font-size="16" fill="#1d1b3f" text-anchor="start" >100</text>
<text x="1863.10" y="951.60" font-size="16" fill="#1d1b3f" text-anchor="start" >150</text>
<rect x="1349.00" y="1135.64" width="13.2" height="68.96" fill="#52cde3"/>
<rect x="1365.84" y="1014.96" width="13.2" height="189.64" fill="#52cde3"/>
<rect x="1382.68" y="1083.92" width="13.2" height="120.68" fill="#52cde3"/>
<rect x="1399.52" y="1049.44" width="13.2" height="155.16" fill="#52cde3"/>
<rect x="1416.36" y="1127.02" width="13.2" height="77.58" fill="#52cde3"/>
<rect x="1433.20" y="1135.64" width="13.2" height="68.96" fill="#52cde3"/>
<rect x="1450.04" y="1049.44" width="13.2" height="155.16" fill="#52cde3"/>
<rect x="1466.88" y="1135.64" width="13.2" height="68.96" fill="#52cde3"/>
<rect x="1483.72" y="1049.44" width="13.2" height="155.16" fill="#52cde3"/>
<rect x="1500.56" y="1049.44" width="13.2" height="155.16" fill="#52cde3"/>
<rect x="1517.40" y="1170.12" width="13.2" height="34.48" fill="#52cde3"/>
<rect x="1551.08" y="1187.36" width="13.2" height="17.24" fill="#52cde3"/>
<rect x="1567.92" y="1109.78" width="13.2" height="94.82" fill="#52cde3"/>
<rect x="1584.76" y="1049.44" width="13.2" height="155.16" fill="#52cde3"/>
<rect x="1601.60" y="1014.96" width="13.2" height="189.64" fill="#52cde3"/>
<rect x="1635.28" y="1170.12" width="13.2" height="34.48" fill="#52cde3"/>
<rect x="1652.12" y="1144.26" width="13.2" height="60.34" fill="#52cde3"/>
<rect x="1685.80" y="1040.82" width="13.2" height="163.78" fill="#52cde3"/>
<rect x="1702.64" y="1118.40" width="13.2" height="86.20" fill="#52cde3"/>
<rect x="1719.48" y="1049.44" width="13.2" height="155.16" fill="#52cde3"/>
<rect x="1736.32" y="1135.64" width="13.2" height="68.96" fill="#52cde3"/>
<rect x="1753.16" y="1083.92" width="13.2" height="120.68" fill="#52cde3"/>
<rect x="1770.00" y="1092.54" width="13.2" height="112.06" fill="#52cde3"/>
<rect x="1786.84" y="1101.16" width="13.2" height="103.44" fill="#52cde3"/>
<rect x="1803.68" y="1075.30" width="13.2" height="129.30" fill="#52cde3"/>
<rect x="1820.52" y="1049.44" width="13.2" height="155.16" fill="#52cde3"/>
<rect x="1837.36" y="1187.36" width="13.2" height="17.24" fill="#52cde3"/>
<line x1="1346.2" y1="1205" x2="1854" y2="1205" stroke="#c9cbd6" stroke-width="1.5"/>
<polyline points="1355.6,1128.8 1372.4,1172.8 1389.3,1155.8 1406.1,1180.6 1423.0,1181.6 1439.8,1181.9 1456.6,1181.2 1473.5,1096.3 1490.3,1148.1 1507.2,1151.4 1524.0,1027.9 1540.8,1204.3 1557.7,1106.1 1574.5,1166.7 1591.4,1153.8 1608.2,1171.8 1625.0,1204.3 1641.9,1047.5 1658.7,1189.0 1675.6,1204.3 1692.4,1185.6 1709.2,1164.3 1726.1,1182.6 1742.9,1144.0 1759.8,1186.3 1776.6,1196.1 1793.4,1189.0 1810.3,1173.4 1827.1,1169.4 1844.0,1204.3" fill="none" stroke="#6a2fa8" stroke-width="2" stroke-linejoin="round"/>
<circle cx="1355.6" cy="1128.8" r="3.6" fill="#6a2fa8"/>
<circle cx="1372.4" cy="1172.8" r="3.6" fill="#6a2fa8"/>
<circle cx="1389.3" cy="1155.8" r="3.6" fill="#6a2fa8"/>
<circle cx="1406.1" cy="1180.6" r="3.6" fill="#6a2fa8"/>
<circle cx="1423.0" cy="1181.6" r="3.6" fill="#6a2fa8"/>
<circle cx="1439.8" cy="1181.9" r="3.6" fill="#6a2fa8"/>
<circle cx="1456.6" cy="1181.2" r="3.6" fill="#6a2fa8"/>
<circle cx="1473.5" cy="1096.3" r="3.6" fill="#6a2fa8"/>
<circle cx="1490.3" cy="1148.1" r="3.6" fill="#6a2fa8"/>
<circle cx="1507.2" cy="1151.4" r="3.6" fill="#6a2fa8"/>
<circle cx="1524.0" cy="1027.9" r="3.6" fill="#6a2fa8"/>
<circle cx="1540.8" cy="1204.3" r="3.6" fill="#6a2fa8"/>
<circle cx="1557.7" cy="1106.1" r="3.6" fill="#6a2fa8"/>
<circle cx="1574.5" cy="1166.7" r="3.6" fill="#6a2fa8"/>
<circle cx="1591.4" cy="1153.8" r="3.6" fill="#6a2fa8"/>
<circle cx="1608.2" cy="1171.8" r="3.6" fill="#6a2fa8"/>
<circle cx="1625.0" cy="1204.3" r="3.6" fill="#6a2fa8"/>
<circle cx="1641.9" cy="1047.5" r="3.6" fill="#6a2fa8"/>
<circle cx="1658.7" cy="1189.0" r="3.6" fill="#6a2fa8"/>
<circle cx="1675.6" cy="1204.3" r="3.6" fill="#6a2fa8"/>
<circle cx="1692.4" cy="1185.6" r="3.6" fill="#6a2fa8"/>
<circle cx="1709.2" cy="1164.3" r="3.6" fill="#6a2fa8"/>
<circle cx="1726.1" cy="1182.6" r="3.6" fill="#6a2fa8"/>
<circle cx="1742.9" cy="1144.0" r="3.6" fill="#6a2fa8"/>
<circle cx="1759.8" cy="1186.3" r="3.6" fill="#6a2fa8"/>
<circle cx="1776.6" cy="1196.1" r="3.6" fill="#6a2fa8"/>
<circle cx="1793.4" cy="1189.0" r="3.6" fill="#6a2fa8"/>
<circle cx="1810.3" cy="1173.4" r="3.6" fill="#6a2fa8"/>
<circle cx="1827.1" cy="1169.4" r="3.6" fill="#6a2fa8"/>
<circle cx="1844.0" cy="1204.3" r="3.6" fill="#6a2fa8"/>
<text x="1355.60" y="1226.00" font-size="16" fill="#1d1b3f" text-anchor="middle" >Jun 22</text>
<text x="1422.96" y="1226.00" font-size="16" fill="#1d1b3f" text-anchor="middle" >Jun 26</text>
<text x="1490.32" y="1226.00" font-size="16" fill="#1d1b3f" text-anchor="middle" >Jun 30</text>
<text x="1557.68" y="1226.00" font-size="16" fill="#1d1b3f" text-anchor="middle" >Jul 4</text>
<text x="1625.04" y="1226.00" font-size="16" fill="#1d1b3f" text-anchor="middle" >Jul 8</text>
<text x="1692.40" y="1226.00" font-size="16" fill="#1d1b3f" text-anchor="middle" >Jul 12</text>
<text x="1759.76" y="1226.00" font-size="16" fill="#1d1b3f" text-anchor="middle" >Jul 16</text>
<text x="1827.12" y="1226.00" font-size="16" fill="#1d1b3f" text-anchor="middle" >Jul 20</text>
</svg>
</body></html>
